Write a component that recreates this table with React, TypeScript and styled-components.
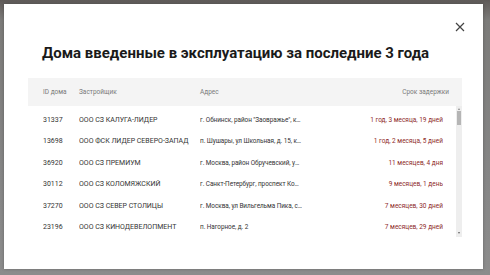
import styled, { createGlobalStyle } from 'styled-components';

type House = {
  id: string;
  developer: string;
  address: string;
  delay: string;
};

const houses: House[] = [
  { id: '31337', developer: 'ООО СЗ КАЛУГА-ЛИДЕР', address: 'г. Обнинск, район "Заовражье", квартал 3, дом 12', delay: '1 год, 3 месяца, 19 дней' },
  { id: '13698', developer: 'ООО ФСК ЛИДЕР СЕВЕРО-ЗАПАД', address: 'п. Шушары, ул Школьная, д. 15, корпус 1', delay: '1 год, 2 месяца, 5 дней' },
  { id: '36920', developer: 'ООО СЗ ПРЕМИУМ', address: 'г. Москва, район Обручевский, улица Академика Челомея', delay: '11 месяцев, 4 дня' },
  { id: '30112', developer: 'ООО СЗ КОЛОМЯЖСКИЙ', address: 'г. Санкт-Петербург, проспект Коломяжский, д. 13', delay: '9 месяцев, 1 день' },
  { id: '37270', developer: 'ООО СЗ СЕВЕР СТОЛИЦЫ', address: 'г. Москва, ул Вильгельма Пика, стр. 4', delay: '7 месяцев, 30 дней' },
  { id: '23196', developer: 'ООО СЗ КИНОДЕВЕЛОПМЕНТ', address: 'п. Нагорное, д. 2', delay: '7 месяцев, 29 дней' },
];

const GlobalStyle = createGlobalStyle`
  html, body {
    margin: 0;
    height: 100%;
  }
  body {
    font-family: Roboto, "Liberation Sans", sans-serif;
    background: linear-gradient(180deg, #5f5a58 0px, #7c7b79 20px, #858585 60%, #8c8c8c 100%);
  }
`;

const App = () => {
  return (
    <Page>
      <GlobalStyle />
      <Modal>
        <CloseButton aria-label="Закрыть">
          <svg width="10" height="10" viewBox="0 0 10 10">
            <path d="M1 1L9 9M9 1L1 9" stroke="#444" strokeWidth="1.2" />
          </svg>
        </CloseButton>
        <Title>Дома введенные в эксплуатацию за последние 3 года</Title>
        <Table>
          <HeadRow>
            <HeadCell>ID дома</HeadCell>
            <HeadCell>Застройщик</HeadCell>
            <HeadCell>Адрес</HeadCell>
            <HeadCell $right>Срок задержки</HeadCell>
          </HeadRow>
          <Body>
            <Rows>
              {houses.map((house) => (
                <Row key={house.id}>
                  <Cell>{house.id}</Cell>
                  <Cell>{house.developer}</Cell>
                  <AddressCell>{house.address}</AddressCell>
                  <DelayCell>{house.delay}</DelayCell>
                </Row>
              ))}
            </Rows>
            <ScrollTrack>
              <ScrollArrow $down={false} />
              <ScrollThumb />
              <ScrollArrow $down />
            </ScrollTrack>
          </Body>
        </Table>
      </Modal>
    </Page>
  );
};

const Page = styled.div`
  box-sizing: border-box;
  height: 275px;
  padding: 4px 7px 6px 4px;
`;

const Modal = styled.div`
  position: relative;
  box-sizing: border-box;
  height: 265px;
  padding: 39px 21px 0 24px;
  background-color: #fff;
  box-shadow: 0 0 3px rgba(0, 0, 0, 0.25);
`;

const CloseButton = styled.button`
  position: absolute;
  top: 16px;
  right: 16px;
  display: flex;
  align-items: center;
  justify-content: center;
  width: 14px;
  height: 14px;
  padding: 0;
  border: none;
  background: none;
  cursor: pointer;
`;

const Title = styled.h2`
  margin: 0 0 15px 14px;
  font-size: 15px;
  line-height: 20px;
  font-weight: 700;
  color: #1a1a1a;
  white-space: nowrap;
`;

const Table = styled.div`
  display: flex;
  flex-direction: column;
`;

const columns = '36px 121px 102px 1fr';

const HeadRow = styled.div`
  display: grid;
  grid-template-columns: ${columns};
  align-items: center;
  height: 28px;
  padding: 0 13px 0 15px;
  background-color: #f4f4f4;
`;

const HeadCell = styled.div<{ $right?: boolean }>`
  font-size: 6.5px;
  color: #7a7a7a;
  text-align: ${({ $right }) => ($right ? 'right' : 'left')};
`;

const Body = styled.div`
  display: flex;
  height: 131px;
`;

const Rows = styled.div`
  flex: 1;
  padding-top: 3px;
  overflow: hidden;
`;

const Row = styled.div`
  display: grid;
  grid-template-columns: ${columns};
  align-items: center;
  height: 21.5px;
  padding: 0 13px 0 15px;
`;

const Cell = styled.div`
  font-size: 7px;
  color: #333;
  white-space: nowrap;
  overflow: hidden;
  text-overflow: ellipsis;
`;

const AddressCell = styled(Cell)`
  font-size: 6.4px;
  letter-spacing: -0.05px;
`;

const DelayCell = styled(Cell)`
  font-size: 6.5px;
  text-align: right;
  color: #8e2a2a;
`;

const ScrollTrack = styled.div`
  display: flex;
  flex-direction: column;
  align-items: center;
  width: 6px;
  background-color: #eeeeee;
`;

const ScrollArrow = styled.div<{ $down: boolean }>`
  width: 0;
  height: 0;
  margin: ${({ $down }) => ($down ? 'auto 0 3px' : '2px 0 1px')};
  border-left: 1.5px solid transparent;
  border-right: 1.5px solid transparent;
  ${({ $down }) => ($down ? 'border-top: 2px solid #666;' : 'border-bottom: 2px solid #888;')}
`;

const ScrollThumb = styled.div`
  width: 4px;
  height: 14px;
  background-color: #b5b5b5;
`;

export default App;
